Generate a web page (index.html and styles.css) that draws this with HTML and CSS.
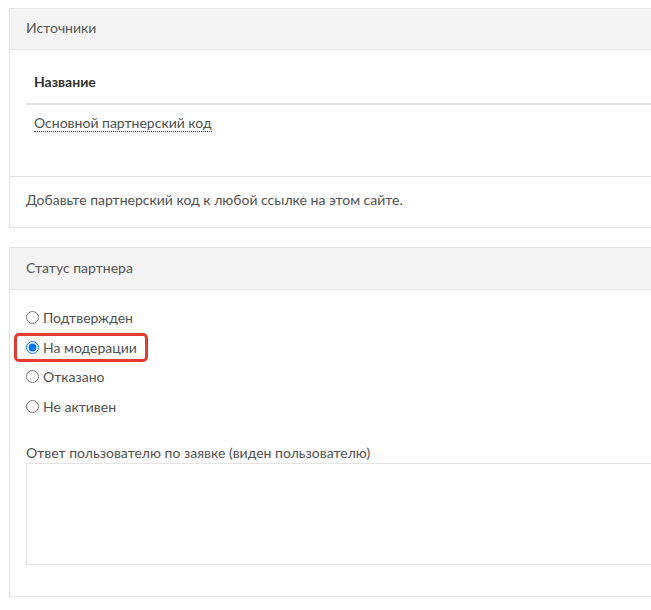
FILE: index.html
```html
<!DOCTYPE html>
<html>
<head>
  <meta charset="utf-8">
  <title>Партнер</title>
  <link rel="stylesheet" href="styles.css">
</head>
<body>
  <div class="page">
    <div class="panel">
      <div class="panel-heading">Источники</div>
      <div class="panel-body">
        <table class="sources">
          <thead>
            <tr><th>Название</th></tr>
          </thead>
          <tbody>
            <tr><td><span class="code-name">Основной партнерский код</span></td></tr>
          </tbody>
        </table>
      </div>
      <div class="panel-footer">Добавьте партнерский код к любой ссылке на этом сайте.</div>
    </div>

    <div class="panel">
      <div class="panel-heading status-heading">Статус партнера</div>
      <div class="panel-body status-body">
        <div class="options">
          <div class="option">
            <label><input type="radio" name="status">Подтвержден</label>
          </div>
          <div class="option">
            <label class="marked"><input type="radio" name="status" checked>На модерации</label>
          </div>
          <div class="option">
            <label><input type="radio" name="status">Отказано</label>
          </div>
          <div class="option">
            <label><input type="radio" name="status">Не активен</label>
          </div>
        </div>
        <label class="field-label" for="answer">Ответ пользователю по заявке (виден пользователю)</label>
        <textarea id="answer"></textarea>
      </div>
    </div>
  </div>
</body>
</html>
```

FILE: styles.css
```css
body {
  margin: 0;
  overflow: hidden;
  font-family: Lato, "Open Sans", sans-serif;
  font-size: 14px;
  color: #505050;
  background: #fff;
}

.page {
  width: 720px;
  padding: 8px 0 0 9px;
}

.panel {
  border: 1px solid #e3e3e3;
  margin-bottom: 19px;
}

.panel-heading {
  background: #f4f4f4;
  border-bottom: 1px solid #e3e3e3;
  padding: 9px 16px 11px;
  line-height: 20px;
  color: #555;
}

.status-heading {
  padding: 10px 16px 11px;
}

.panel-body {
  padding: 14px 16px 35px;
}

table.sources {
  width: 100%;
  border-collapse: collapse;
}

table.sources th {
  text-align: left;
  font-weight: bold;
  color: #2f2f2f;
  padding: 8px 8px 11px;
  line-height: 20px;
  border-bottom: 2px solid #e3e3e3;
}

table.sources td {
  padding: 8px;
  line-height: 20px;
}

.code-name {
  border-bottom: 1px dotted #333;
}

.panel-footer {
  border-top: 1px solid #e3e3e3;
  padding: 13px 16px 17px;
  line-height: 20px;
}

.status-body {
  padding: 13px 16px 31px;
}

.option {
  height: 29.5px;
  display: flex;
  align-items: center;
}

.option label {
  display: inline-flex;
  align-items: center;
  position: relative;
  line-height: 19px;
}

.option input {
  width: 13px;
  height: 13px;
  margin: 0 4px 0 0;
}

.option label.marked::after {
  content: "";
  position: absolute;
  left: -12px;
  right: -11px;
  top: -5px;
  bottom: -5px;
  border: 3px solid #e53a2f;
  border-radius: 5px;
}

.field-label {
  display: block;
  margin-top: 22px;
  line-height: 20px;
}

textarea {
  display: block;
  box-sizing: border-box;
  width: 100%;
  height: 102px;
  border: 1px solid #e3e3e3;
  resize: none;
  font: inherit;
}
```
